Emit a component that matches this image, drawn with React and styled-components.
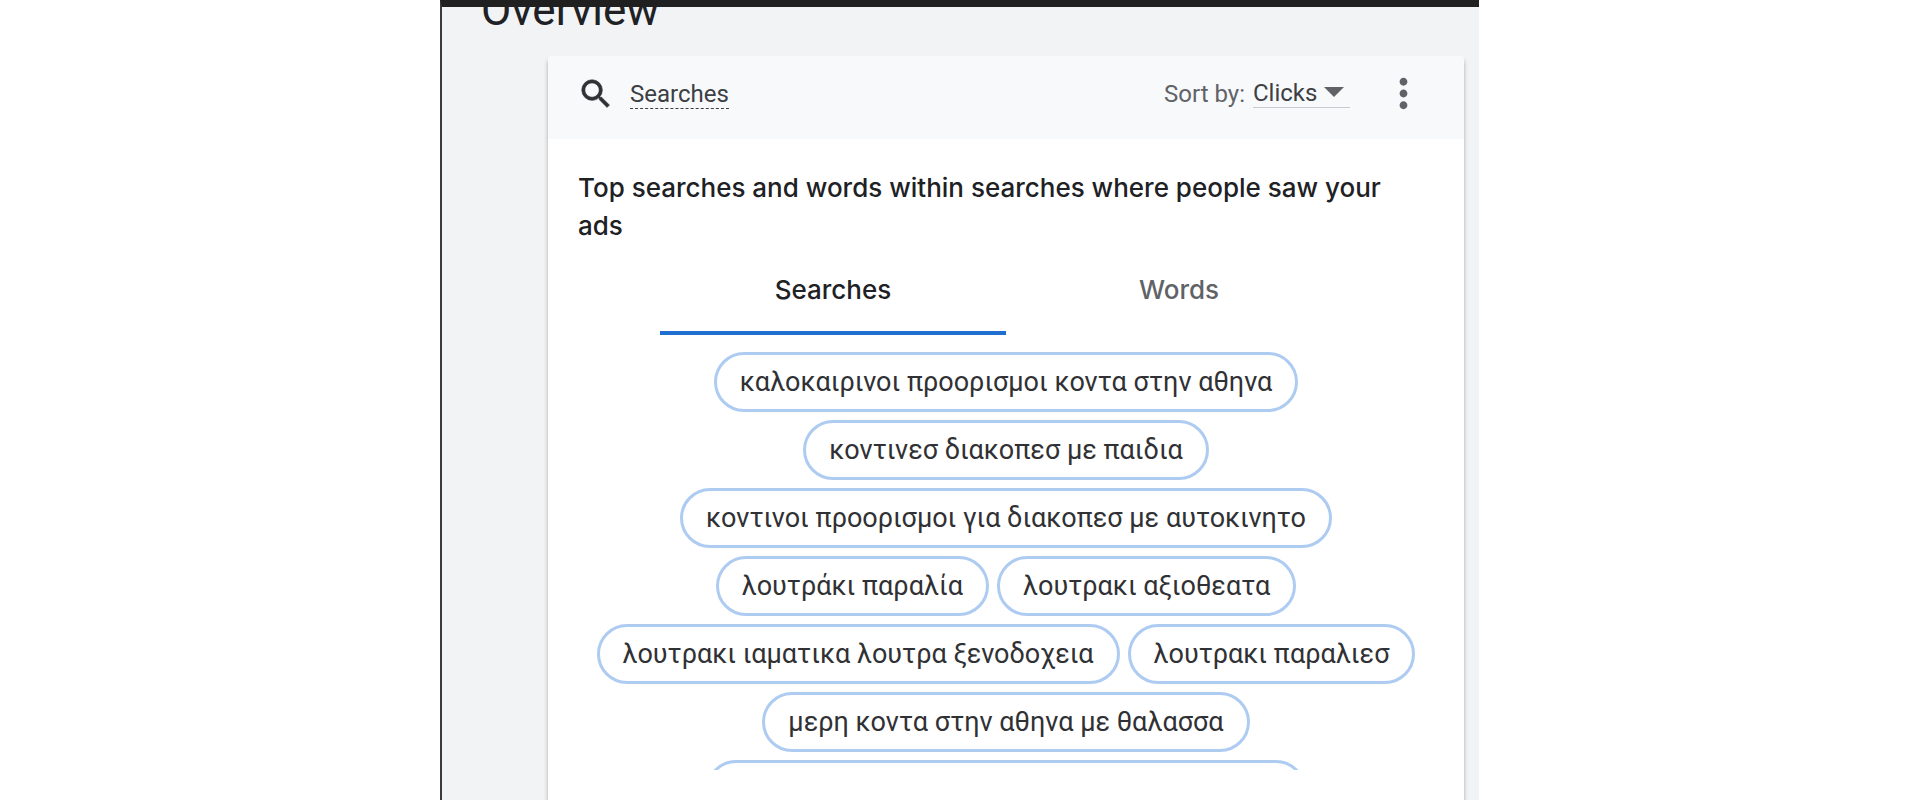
import { useState } from 'react';
import styled, { createGlobalStyle } from 'styled-components';
import { MdMoreVert, MdSearch } from 'react-icons/md';

const GlobalStyle = createGlobalStyle`
  * {
    box-sizing: border-box;
  }

  body {
    margin: 0;
    background: #fff;
    font-family: Roboto, 'Noto Sans', sans-serif;
    color: #202124;
  }

  button,
  select {
    font-family: inherit;
  }
`;

const Page = styled.div`
  display: grid;
  grid-template-columns: 440fr 1039fr 441fr;
  height: 100vh;
`;

const Panel = styled.main`
  grid-column: 2;
  display: flex;
  flex-direction: column;
  min-width: 0;
  overflow: hidden;
  background: #f1f3f4;
  border-top: 7px solid #202020;
  border-left: 2px solid #3c3c3c;
`;

const Heading = styled.h1`
  flex-shrink: 0;
  margin: -25px 0 18px 39px;
  font-size: 44px;
  font-weight: 400;
  line-height: 56px;
`;

const Card = styled.section`
  flex: 1 0 auto;
  margin: 0 15px 0 106px;
  background: #fff;
  border-radius: 4px 4px 0 0;
  box-shadow: 0 4px 4px rgba(60, 64, 67, 0.4);
`;

const Header = styled.header`
  display: flex;
  align-items: center;
  padding: 14px 37px 22px 29px;
  background: #f8f9fb;
  border-radius: 4px 4px 0 0;
`;

const SearchIcon = styled(MdSearch)`
  width: 38px;
  height: 38px;
  color: #303134;

  path:last-child {
    stroke: #303134;
    stroke-width: 0.4;
  }
`;

const HeaderLink = styled.a`
  margin: 0 auto 0 15px;
  padding-top: 2px;
  border-bottom: 1px dashed #3c4043;
  font-size: 24px;
  line-height: 28px;
  color: #3c4043;
  text-decoration: none;
`;

const SortLabel = styled.label`
  margin-right: 8px;
  font-size: 24px;
  line-height: 28px;
  color: #5f6368;
`;

const SelectWrap = styled.div`
  position: relative;
  border-bottom: 1px solid #c8cacd;
`;

const Select = styled.select`
  display: block;
  width: 97px;
  padding: 0;
  border: 0;
  background: none;
  appearance: none;
  font-size: 24px;
  line-height: 28px;
  color: #3c4043;
`;

const Arrow = styled.span`
  position: absolute;
  top: 8px;
  right: 6px;
  border: 10px solid transparent;
  border-top-color: #5f6368;
  border-bottom: 0;
  pointer-events: none;
`;

const MenuButton = styled.button`
  display: flex;
  margin-left: 30px;
  padding: 0;
  border: 0;
  background: none;
  color: #5f6368;

  svg {
    width: 47px;
    height: 47px;
  }
`;

const Body = styled.div`
  padding: 30px 30px;
`;

const Title = styled.h2`
  margin: 0 16px 0 0;
  font-family: Inter, Roboto, sans-serif;
  font-size: 26px;
  font-weight: 500;
  line-height: 38px;
`;

const Tabs = styled.div`
  display: flex;
  margin: 10px 82px 17px;
`;

const Tab = styled.button`
  flex: 1;
  height: 80px;
  padding: 0 0 8px;
  border: 0;
  border-bottom: 4px solid ${({ $active }) => ($active ? '#1f6fd0' : 'transparent')};
  background: none;
  font-family: Inter, Roboto, sans-serif;
  font-size: 26px;
  font-weight: 500;
  color: ${({ $active }) => ($active ? '#202124' : '#5f6368')};
`;

const Chips = styled.div`
  display: flex;
  flex-wrap: wrap;
  justify-content: center;
  gap: 8px;
  max-height: 418px;
  overflow: hidden;
`;

const Chip = styled.button`
  height: 60px;
  padding: 0 23px;
  border: 3px solid #aecbf2;
  border-radius: 30px;
  background: #fff;
  font-size: 27px;
  color: #303134;
`;

const searches = [
  'καλοκαιρινοι προορισμοι κοντα στην αθηνα',
  'κοντινεσ διακοπεσ με παιδια',
  'κοντινοι προορισμοι για διακοπεσ με αυτοκινητο',
  'λουτράκι παραλία',
  'λουτρακι αξιοθεατα',
  'λουτρακι ιαματικα λουτρα ξενοδοχεια',
  'λουτρακι παραλιεσ',
  'μερη κοντα στην αθηνα με θαλασσα',
  'μερη για διακοπεσ κοντα στην αθηνα το μαιο',
];

const tabs = ['Searches', 'Words'];

const App = () => {
  const [active, setActive] = useState('Searches');

  return (
    <>
      <GlobalStyle />
      <Page>
        <Panel>
          <Heading>Overview</Heading>
          <Card>
            <Header>
              <SearchIcon />
              <HeaderLink href="#searches">Searches</HeaderLink>
              <SortLabel htmlFor="sort">Sort by:</SortLabel>
              <SelectWrap>
                <Select id="sort">
                  <option>Clicks</option>
                </Select>
                <Arrow />
              </SelectWrap>
              <MenuButton aria-label="More options">
                <MdMoreVert />
              </MenuButton>
            </Header>
            <Body id="searches">
              <Title>Top searches and words within searches where people saw your ads</Title>
              <Tabs role="tablist">
                {tabs.map((tab) => (
                  <Tab
                    key={tab}
                    role="tab"
                    aria-selected={tab === active}
                    $active={tab === active}
                    onClick={() => setActive(tab)}
                  >
                    {tab}
                  </Tab>
                ))}
              </Tabs>
              <Chips>
                {searches.map((text) => (
                  <Chip key={text}>{text}</Chip>
                ))}
              </Chips>
            </Body>
          </Card>
        </Panel>
      </Page>
    </>
  );
};

export default App;
